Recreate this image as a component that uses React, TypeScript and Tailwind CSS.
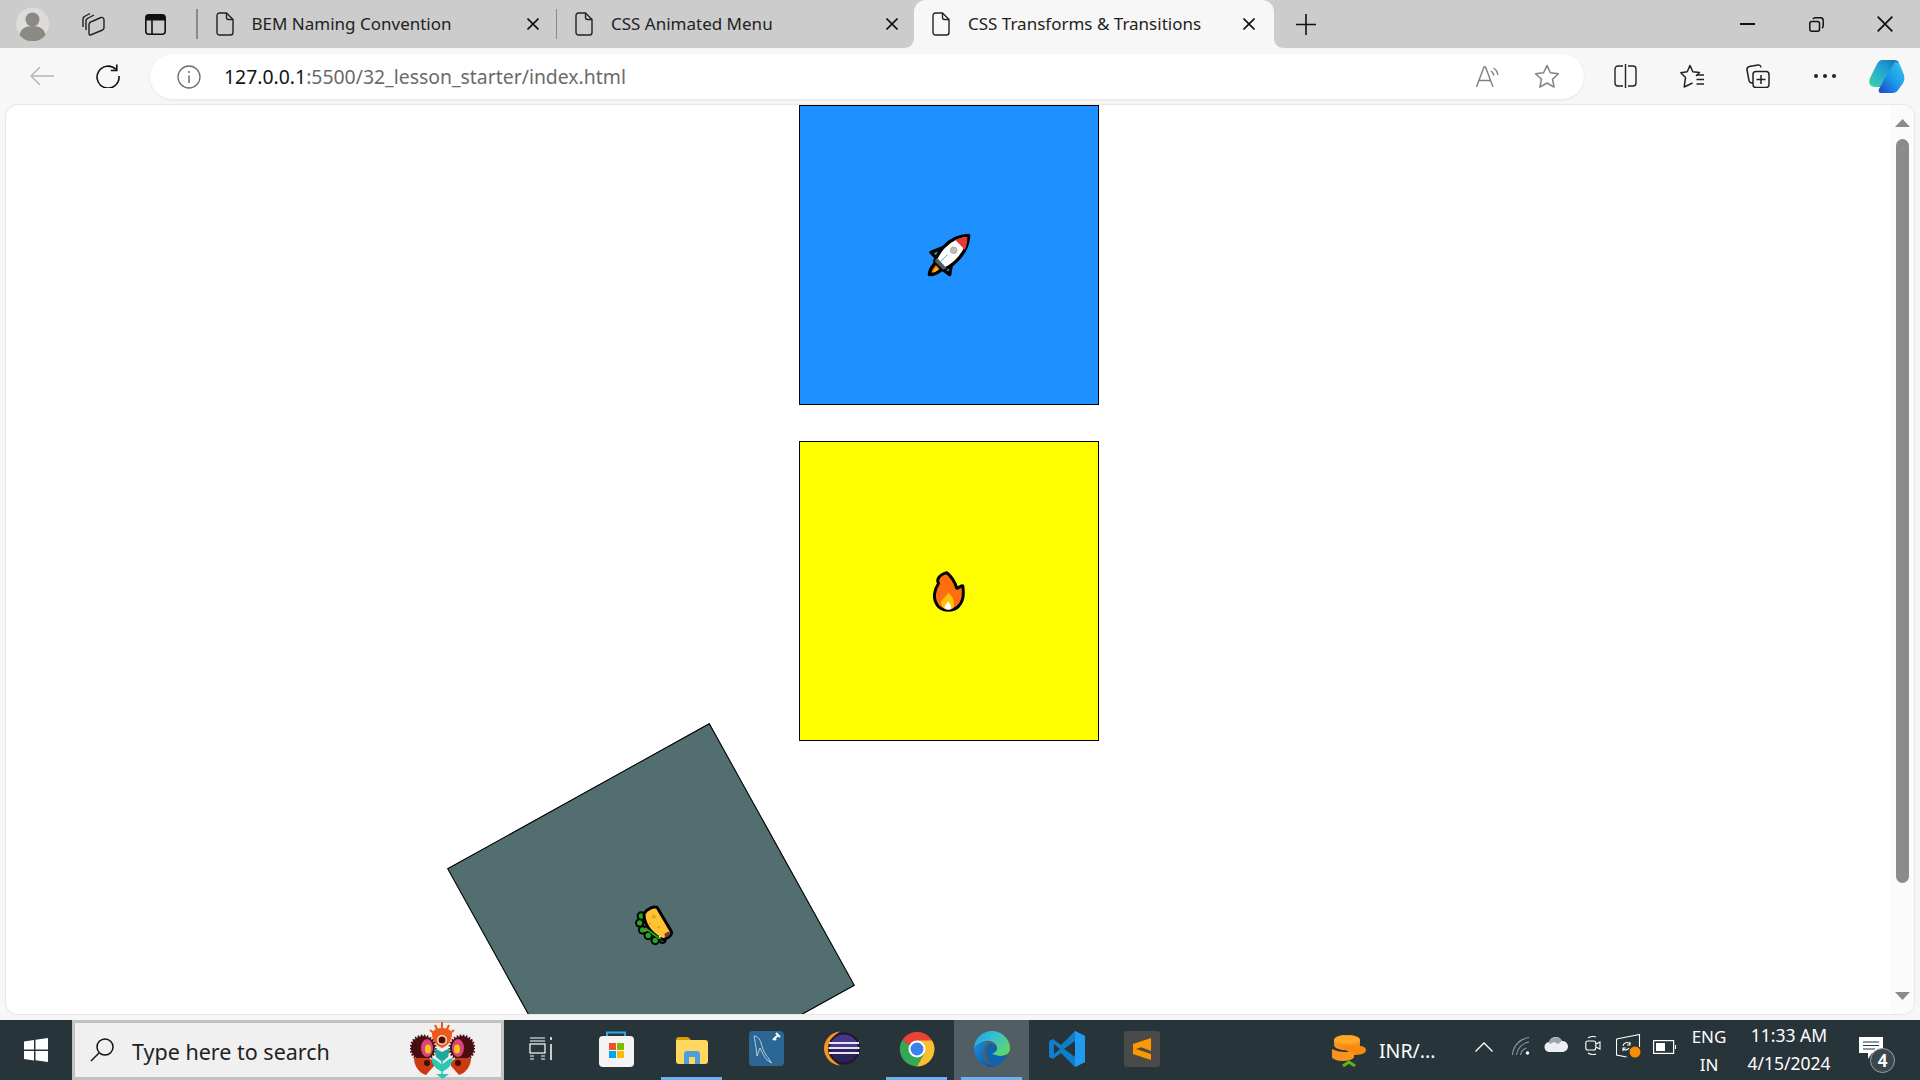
import type { ReactNode } from 'react'

const sans = '[font-family:"Noto_Sans",sans-serif]'

function DocIcon() {
  return (
    <svg viewBox="0 0 18 24" className="w-[18px] h-[24px] shrink-0" fill="none" stroke="#222" strokeWidth="1.4">
      <path d="M3 1h7.5L17 7.5V20.5a2.5 2.5 0 0 1-2.5 2.500H3.500A2.500 2.500 0 0 1 1 20.500V3.500A2.500 2.500 0 0 1 3.500 1Z" strokeLinejoin="round" />
      <path d="M10.500 1v4.500a2 2 0 0 0 2 2H17" />
    </svg>
  )
}

function CloseX({ size = 12, width = 1.6 }: { size?: number; width?: number }) {
  return (
    <svg viewBox="0 0 12 12" width={size} height={size} className="shrink-0" stroke="#111" strokeWidth={width * 12 / size} fill="none">
      <path d="M.5.5l11 11M11.500.5l-11 11" />
    </svg>
  )
}

function Tab({ title, className, active }: { title: string; className: string; active?: boolean }) {
  return (
    <div className={`relative flex items-center h-12 pl-[18px] shrink-0 ${className}`}>
      {active && (
        <svg viewBox="0 0 10 10" className="absolute bottom-0 left-[-10px] w-[10px] h-[10px]"><path d="M10 0v10H0C6 10 10 6 10 0Z" fill="#f7f7f7" /></svg>
      )}
      {active && (
        <svg viewBox="0 0 10 10" className="absolute bottom-0 right-[-10px] w-[10px] h-[10px]"><path d="M0 0v10h10C4 10 0 6 0 0Z" fill="#f7f7f7" /></svg>
      )}
      <DocIcon />
      <span className="ml-[18px] w-[257px] text-[17px] text-[#222] whitespace-nowrap">{title}</span>
      <span className="ml-[18px]"><CloseX /></span>
    </div>
  )
}

function TitleBar() {
  return (
    <div className="h-12 bg-[#cccccc] flex items-center shrink-0">
      <svg viewBox="0 0 33 34" className="w-[33px] h-[34px] ml-[16px] shrink-0">
        <circle cx="16.500" cy="17" r="16.500" fill="#dcdcd8" />
        <circle cx="16.500" cy="12.500" r="7" fill="#8c8984" />
        <path d="M3.500 28c1-6 6-9 13-9s12 3 13 9a16.500 16.500 0 0 1-26 0Z" fill="#8c8984" />
      </svg>
      <svg viewBox="0 0 25 24" className="w-[25px] h-[24px] ml-[31px] shrink-0" fill="none" stroke="#222" strokeWidth="1.400" strokeLinejoin="round">
        <path d="M3 15V7c0-1 .5-2 1.500-2.500L10 1.500" />
        <path d="M6 18V8.500C6 7.500 6.500 7 7.500 6.500L14 3" />
        <path d="M10 23h.5l11-4.500c1.500-.5 2.500-1.500 2.500-3V8c0-2-1.500-3-3-2.500l-8 3.500C11 9.500 9 11 9 13v8.500c0 1 .5 1.500 1 1.500Z" />
      </svg>
      <svg viewBox="0 0 21 21" className="w-[21px] h-[21px] ml-[40px] shrink-0" fill="none">
        <rect x=".8" y=".8" width="19.400" height="19.400" rx="3" stroke="#111" strokeWidth="1.600" />
        <path d="M1 1h19v5.500H1Z" fill="#111" />
        <path d="M7 6v14" stroke="#111" strokeWidth="1.600" />
      </svg>
      <div className="w-[1.500px] h-[30px] bg-[#8a8a8a] ml-[30px] shrink-0" />
      <Tab title="BEM Naming Convention" className="w-[358px]" />
      <div className="w-[1.500px] h-[30px] bg-[#8a8a8a] shrink-0" />
      <Tab title="CSS Animated Menu" className="w-[357px]" />
      <Tab title="CSS Transforms &amp; Transitions" className="w-[360px] bg-[#f7f7f7] rounded-t-[12px]" active />
      <svg viewBox="0 0 20 21" className="w-[20px] h-[21px] ml-[22px] shrink-0" stroke="#111" strokeWidth="1.600">
        <path d="M10 0v21M0 10.500h20" />
      </svg>
      <div className="ml-auto flex items-center">
        <div className="w-[15px] h-[2px] bg-[#111]" />
        <svg viewBox="0 0 15 15" className="w-[15px] h-[15px] ml-[54px]" fill="none" stroke="#111" strokeWidth="1.500">
          <rect x=".8" y="4.500" width="9.700" height="9.700" rx="2" />
          <path d="M4 2c.5-.8 1.200-1.200 2-1.200h5.500c1.500 0 2.700 1.200 2.700 2.700V9c0 .8-.4 1.500-1.200 2" />
        </svg>
        <span className="ml-[53px] mr-[27px]"><CloseX size={16} width={1.8} /></span>
      </div>
    </div>
  )
}

function ToolIcons() {
  return (
    <div className="flex items-center ml-[30px] mt-[5px]">
      <svg viewBox="0 0 23 24" className="w-[23px] h-[24px]" fill="none" stroke="#222" strokeWidth="1.400">
        <path d="M9 2H4A3 3 0 0 0 1 5v14a3 3 0 0 0 3 3h5M14 2h5a3 3 0 0 1 3 3v14a3 3 0 0 1-3 3h-5M11.500 0v24" />
      </svg>
      <svg viewBox="0 0 24 25" className="w-[24px] h-[25px] ml-[43px]" fill="none" stroke="#222" strokeWidth="1.500" strokeLinejoin="round">
        <path d="M16 12l3.500-3.500-6.700-.8L10 1.500 7.200 7.700l-6.400 1 4.700 4.800L4.200 23l8.300-4" />
        <path d="M16.500 11H24M16.500 15.500H24M16.500 20H24" />
      </svg>
      <svg viewBox="0 0 24 24" className="w-[24px] h-[24px] ml-[42px]" fill="none" stroke="#222" strokeWidth="1.500" strokeLinejoin="round">
        <path d="M7 19H6c-1.500 0-2.500-1-3-2.500L1 6C.8 4 2 2.800 3.500 2.500L12 1c1.500-.2 2.800.8 3 2.500" />
        <rect x="7" y="7.500" width="16" height="16" rx="3" />
        <path d="M15 11v9M10.500 15.500h9" />
      </svg>
      <div className="flex items-center gap-[5px] ml-[44px] w-[20px]">
        <span className="w-[4px] h-[4px] rounded-full bg-[#222] shrink-0" />
        <span className="w-[4px] h-[4px] rounded-full bg-[#222] shrink-0" />
        <span className="w-[4px] h-[4px] rounded-full bg-[#222] shrink-0" />
      </div>
      <svg viewBox="0 0 36 34" className="w-[36px] h-[34px] ml-[35px]">
        <defs>
          <linearGradient id="cpa" x1="0" y1="1" x2="1" y2="0">
            <stop offset="0" stopColor="#3fd6a5" />
            <stop offset=".6" stopColor="#1f9fd6" />
            <stop offset="1" stopColor="#0f6f9f" />
          </linearGradient>
          <linearGradient id="cpb" x1="0" y1="1" x2="1" y2="0">
            <stop offset="0" stopColor="#2340c8" />
            <stop offset=".5" stopColor="#1b9ce8" />
            <stop offset="1" stopColor="#38c6ee" />
          </linearGradient>
        </defs>
        <path d="M13 1h12c3 0 4 1 5 3L17 26c-1 1-2 2-5 2H6C1 28-1 24 1 19L8 5c1-2 3-4 5-4Z" fill="url(#cpa)" />
        <path d="M26 3c3 0 4 2 5 3l4 10c1 4 0 8-3 11l-3 4c-1 2-3 3-6 3H12c-2 0-3-2-2-4l5-9Z" fill="url(#cpb)" />
      </svg>
    </div>
  )
}

function Toolbar() {
  return (
    <div className="h-[57px] bg-[#f7f7f7] flex items-start pt-[6px] shrink-0">
      <svg viewBox="0 0 24 20" className="w-[24px] h-[20px] ml-[30px] mt-[12px] shrink-0" fill="none" stroke="#b5b5b5" strokeWidth="1.500">
        <path d="M24 10H1M10 1l-9 9 9 9" />
      </svg>
      <svg viewBox="0 0 24 24" className="w-[24px] h-[24px] ml-[42px] mt-[10px] shrink-0" fill="none" stroke="#111" strokeWidth="1.600">
        <path d="M20 5.500A11 11 0 1 0 23 12" />
        <path d="M20.800 .5v6h-6" />
      </svg>
      <div className="ml-[30px] w-[1434px] h-[45px] bg-white rounded-[23px] shadow-[0_1px_3px_rgba(0,0,0,0.08)] flex items-center shrink-0">
        <svg viewBox="0 0 24 24" className="w-[24px] h-[24px] ml-[27px] shrink-0" fill="none" stroke="#6e6e6e" strokeWidth="1.300">
          <circle cx="12" cy="12" r="11" />
          <path d="M12 10.500V18" strokeWidth="1.500" />
          <circle cx="12" cy="7" r="1" fill="#6e6e6e" stroke="none" />
        </svg>
        <span className="ml-[23px] mt-[1px] text-[19.400px] text-[#6a6a6a] whitespace-nowrap"><span className="text-[#111]">127.0.0.1</span>:5500/32_lesson_starter/index.html</span>
        <svg viewBox="0 0 24 22" className="w-[24px] h-[22px] ml-auto shrink-0" fill="none" stroke="#808080" strokeWidth="1.400">
          <path d="M.5 21L8 1h1.500L17 21M3.500 14.500h11" />
          <path d="M15 5c1.500 1 2.500 2.500 2.700 4.500M17.500 2c2.500 1.500 4 4 4.300 7" />
        </svg>
        <svg viewBox="0 0 26 25" className="w-[26px] h-[25px] ml-[34px] mr-[24px] shrink-0" fill="none" stroke="#808080" strokeWidth="1.500" strokeLinejoin="round">
          <path d="M13 1.500l3.400 7.300 8 1-5.900 5.400 1.600 7.900L13 19l-7.100 4.100 1.600-7.900L1.600 9.800l8-1Z" />
        </svg>
      </div>
      <ToolIcons />
    </div>
  )
}

function RocketEmoji() {
  return (
    <svg viewBox="80 40 132 135" className="w-[44px] h-[45px]">
      <g stroke="#000" strokeWidth="10" strokeLinejoin="round">
        <path d="M108 128C95 140 88 150 87 165c13 0 28-7 38-17Z" fill="#f57c00" />
        <path d="M128 84L92 98l18 20ZM155 124l-7 41-24-18Z" fill="#29a9e0" />
        <path d="M205 47c-30 1-55 13-75 35-12 13-22 30-27 43l25 25c13-5 30-16 42-28 22-22 34-47 35-75Z" fill="#fff" />
      </g>
      <path d="M108 144c-5 5-9 10-11 15 6-2 12-5 17-9Z" fill="#ffc107" />
      <path d="M201 51c-14 1-26 5-36 10l29 29c5-12 7-25 7-39Z" fill="#e53935" />
      <path d="M110 114l29 32-11 4-25-25Z" fill="#4f5b62" />
      <circle cx="160" cy="92" r="10" fill="#bdbdbd" stroke="#9e9e9e" strokeWidth="2" />
      <path d="M121 126l20-21" stroke="#29b6f6" strokeWidth="3" />
    </svg>
  )
}

function FireEmoji() {
  return (
    <svg viewBox="95 30 100 130" className="w-[33px] h-[43px]">
      <path d="M140 38c10 7 25 27 30 47 5 0 15-10 18-7 4 22 2 47-13 62-15 15-50 18-65-5-15-20-5-50 5-65-7-10 0-25 25-32Z" fill="#ff6d10" stroke="#000" strokeWidth="9" strokeLinejoin="round" />
      <path d="M145 98c15 15 20 32 15 47-15 10-35 5-38-15 0-10 10-12 23-32Z" fill="#ffc107" />
      <path d="M143 125c7 6 12 14 10 23-8 4-18 2-20-6 0-6 6-8 10-17Z" fill="#fff" />
    </svg>
  )
}

function TacoEmoji() {
  return (
    <svg viewBox="72 38 124 136" className="w-[41px] h-[45px] rotate-[29deg] translate-x-[4px]">
      <g fill="#000">
        <circle cx="92" cy="78" r="14" /><circle cx="87" cy="99" r="14" /><circle cx="96" cy="120" r="14" />
        <circle cx="113" cy="137" r="14" /><circle cx="134" cy="152" r="14" /><circle cx="156" cy="150" r="13" />
      </g>
      <g fill="#1faa1f">
        <circle cx="92" cy="78" r="8" /><circle cx="87" cy="99" r="8" /><circle cx="96" cy="120" r="8" />
        <circle cx="113" cy="137" r="8" /><circle cx="134" cy="152" r="8" /><circle cx="156" cy="149" r="7" />
      </g>
      <path d="M100 70c10-15 30-22 40-18l43 73c3 7-3 15-11 18l-12 7c-30-10-60-40-60-80Z" fill="#ffc233" stroke="#000" strokeWidth="9" strokeLinejoin="round" />
      <path d="M105 112l50 37-12-2-40-30Z" fill="#1faa1f" />
      <circle cx="105" cy="122" r="4" fill="#e8604c" /><circle cx="148" cy="141" r="3" fill="#fff" />
      <circle cx="130" cy="80" r="6" fill="#e8a317" /><circle cx="118" cy="101" r="3" fill="#e8a317" /><circle cx="145" cy="112" r="4" fill="#e8a317" /><circle cx="110" cy="72" r="2" fill="#e8a317" />
      <path d="M162 132l14-8 4 8-8 9-8 2Z" fill="#7a3b3b" />
    </svg>
  )
}

function Box({ className, children }: { className: string; children: ReactNode }) {
  return (
    <div className={`w-[300px] h-[300px] border border-black flex items-center justify-center shrink-0 ${className}`}>
      {children}
    </div>
  )
}

function Scrollbar() {
  return (
    <div className="w-[23px] bg-[#fbfbfb] flex flex-col items-center pt-[14px] px-[2px] shrink-0">
      <svg viewBox="0 0 15 8" className="w-[15px] h-[8px] shrink-0"><path d="M7.500 0L15 8H0Z" fill="#8a8a8a" /></svg>
      <div className="w-[13px] h-[744px] mt-[12px] rounded-full bg-[#8b8b8b] shrink-0" />
      <svg viewBox="0 0 15 8" className="w-[15px] h-[8px] mt-[109px] shrink-0"><path d="M0 0h15L7.500 8Z" fill="#8a8a8a" /></svg>
    </div>
  )
}

function Page() {
  return (
    <div className="flex-1 min-h-0 bg-[#f7f7f7] pl-[6px] pr-[6px] pb-[6px]">
      <div className="h-full bg-white rounded-[12px] shadow-[0_0_1px_1px_#e6e6e6] overflow-hidden flex">
        <div className="flex-1 flex flex-col items-center overflow-hidden">
          <Box className="bg-[#1e90ff]"><RocketEmoji /></Box>
          <Box className="bg-[#ffff00] mt-[36px]"><FireEmoji /></Box>
          <Box className="bg-[#536e70] mt-[36px] -translate-x-[298px] -rotate-[29deg]"><TacoEmoji /></Box>
        </div>
        <Scrollbar />
      </div>
    </div>
  )
}

function Flower() {
  return (
    <svg viewBox="0 0 65 57" className="w-[65px] h-[57px] ml-[-29px] shrink-0">
      <g stroke="#e8590c" strokeWidth="2">
        <path d="M32 18L20 8M32 18L25 3M32 18V0M32 18l7-15M32 18L44 8" />
      </g>
      <path d="M22 12c0-8 20-8 20 0 0 6-4 12-10 14-6-2-10-8-10-14Z" fill="#f0591c" />
      <circle cx="32" cy="18" r="5" fill="#fbe2c0" /><circle cx="32" cy="18" r="3.500" fill="#4a0e12" />
      <circle cx="13" cy="26" r="12" fill="#4a0e12" stroke="#4a0e12" strokeWidth="3" strokeDasharray="1.500 1.500" />
      <circle cx="52" cy="26" r="12" fill="#4a0e12" stroke="#4a0e12" strokeWidth="3" strokeDasharray="1.500 1.500" />
      <ellipse cx="17" cy="26" rx="6" ry="9" fill="#d9477a" /><ellipse cx="48" cy="26" rx="6" ry="9" fill="#d9477a" />
      <ellipse cx="18" cy="27" rx="3" ry="4.500" fill="#f5c518" /><ellipse cx="47" cy="27" rx="3" ry="4.500" fill="#f5c518" />
      <path d="M4 36h14c5 2 7 5 6 8l-8 9C9 51 4 44 4 36Z" fill="#cc3a10" /><path d="M61 36H47c-5 2-7 5-6 8l8 9c7-2 12-9 12-17Z" fill="#cc3a10" />
      <circle cx="17" cy="41" r="3" fill="#3a0c0c" /><circle cx="48" cy="41" r="3" fill="#3a0c0c" />
      <path d="M24 26l8 4 8-4-2 9-6 5-6-5Z" fill="#1fa898" />
      <path d="M32 38v18M32 44c-3-3-6-6-10-7 1 6 5 10 10 12 5-2 9-6 10-12-4 1-7 4-10 7Z" fill="#2cc7b2" stroke="#2cc7b2" strokeWidth="1.500" />
      <path d="M26 52h13l-6.500 5Z" fill="#2cc7b2" />
    </svg>
  )
}

function TaskSlot({ children, active, open, className }: { children: ReactNode; active?: boolean; open?: boolean; className?: string }) {
  return (
    <div className={`w-[75px] h-[60px] flex flex-col items-center shrink-0 ${active ? 'bg-[#515e64]' : ''} ${className ?? ''}`}>
      <div className="flex-1 flex items-center justify-center">{children}</div>
      <div className={`w-[61px] h-[3px] ${open ? 'bg-[#6cb2ee]' : ''}`} />
    </div>
  )
}

function TaskApps() {
  return (
    <div className="flex shrink-0">
      <TaskSlot>
        <svg viewBox="0 0 24 23" className="w-[24px] h-[23px] mr-[2px]" fill="none" stroke="#fff" strokeWidth="1.200">
          <path d="M1 1h15M1 4h15M1 19h4M12 19h4M1 22h4M12 22h4" />
          <rect x="1" y="7" width="15" height="9" />
          <path d="M22 0v3M22 7v16" strokeWidth="1.500" />
        </svg>
      </TaskSlot>
      <TaskSlot>
        <svg viewBox="0 0 35 36" className="w-[35px] h-[36px]">
          <path d="M8 6V1.500h18V6" fill="none" stroke="#29a9f0" strokeWidth="2" />
          <rect x="0" y="5" width="35" height="31" rx="4" fill="#f4f4f4" />
          <rect x="10" y="12" width="7" height="7" fill="#f25022" /><rect x="18" y="12" width="7" height="7" fill="#7fba00" />
          <rect x="10" y="20" width="7" height="7" fill="#00a4ef" /><rect x="18" y="20" width="7" height="7" fill="#ffb900" />
        </svg>
      </TaskSlot>
      <TaskSlot open>
        <svg viewBox="0 0 32 27" className="w-[32px] h-[27px] mt-[3px]">
          <path d="M0 3c0-2 1-3 3-3h9l3 3H0Z" fill="#d9a000" />
          <path d="M0 3h29c2 0 3 1 3 3v18c0 2-1 3-3 3H3c-2 0-3-1-3-3Z" fill="#ffd75e" />
          <path d="M8 27V17c0-2 1-3 3-3h10c2 0 3 1 3 3v10h-5v-7h-6v7Z" fill="#4a9ede" />
        </svg>
      </TaskSlot>
      <TaskSlot>
        <svg viewBox="0 0 35 35" className="w-[35px] h-[35px]" fill="none">
          <rect width="35" height="35" rx="4" fill="#2b6794" />
          <path d="M5 5c3 0 6 3 7 7 2 5 2 8 5 12 1 2 3 3 4 6l2 2-5-3c-3-3-5-8-7-12l-3 8-1-9C6 12 6 8 5 5Z" stroke="#d9e4ec" strokeWidth=".8" />
          <path d="M24 9l5-5M27 2l4 4M25 7l2 2" stroke="#fff" strokeWidth="2" />
        </svg>
      </TaskSlot>
      <TaskSlot>
        <svg viewBox="0 0 37 35" className="w-[37px] h-[35px]">
          <path d="M17 .5C8 1 1 9 1 17.500S8 34 17 34.500C11 31 7 25 7 17.500S11 4 17 .5Z" fill="#f7941e" />
          <circle cx="21" cy="17.500" r="16" fill="#1c1630" />
          <path d="M7 17.500a14 14 0 0 1 28 0Z" fill="#473788" /><path d="M7 17.500a14 14 0 0 0 28 0Z" fill="#2c2255" />
          <path d="M6 12h30M5.500 17h31M6 22h30" stroke="#e8e4f4" strokeWidth="2" />
        </svg>
      </TaskSlot>
      <TaskSlot open>
        <svg viewBox="0 0 36 36" className="w-[36px] h-[36px]">
          <path d="M18 18L3 9.500A17.500 17.500 0 0 1 33.200 9.500Z" fill="#ea4335" />
          <path d="M18 18h17.500a17.500 17.500 0 0 1-17.600 17.500Z" fill="#fbc02d" />
          <path d="M33 9.500H18v8.500h17.500c0-3-1-6-2.500-8.500Z" fill="#fbc02d" />
          <path d="M18 18L3 9.500A17.500 17.500 0 0 0 18 35.500l7.500-13Z" fill="#34a853" />
          <circle cx="18" cy="18" r="8.500" fill="#fff" /><circle cx="18" cy="18" r="6.500" fill="#3b82f0" />
        </svg>
      </TaskSlot>
      <TaskSlot open active>
        <svg viewBox="0 0 36 36" className="w-[36px] h-[36px]">
          <defs>
            <linearGradient id="edg" x1="0" y1="0" x2="1" y2=".6">
              <stop offset="0" stopColor="#1b9de2" /><stop offset=".5" stopColor="#35c1d6" /><stop offset="1" stopColor="#5ed56c" />
            </linearGradient>
            <linearGradient id="edb" x1="0" y1="0" x2="1" y2="1">
              <stop offset="0" stopColor="#1a8fdc" /><stop offset="1" stopColor="#0c4f9e" />
            </linearGradient>
          </defs>
          <path d="M18 0c10 0 18 8 18 17 0 5-4 8-9 8-4 0-8-1-9-3 2 0 5-2 5-5 0-5-6-8-11-7C6 11 2 14 0 18 0 8 8 0 18 0Z" fill="url(#edg)" />
          <path d="M0 18c2-4 6-7 12-7 1 0 3 0 4 1-4 1-7 5-7 10 0 6 5 12 12 13-1 .7-2 1-3 1C8 36 0 28 0 18Z" fill="url(#edb)" />
          <path d="M12 21c0-3 1-6 4-8 3 0 6 2 7 4 0 3-3 5-5 5 1 2 5 3 9 3 3 0 5-1 6-2-2 6-7 11-12 12-5-2-9-8-9-14Z" fill="#0f62b0" />
        </svg>
      </TaskSlot>
      <TaskSlot>
        <svg viewBox="0 0 36 36" className="w-[36px] h-[36px]">
          <path d="M26 0l10 5v26l-10 5-14-14-8 6-4-2V10l4-2 8 6Z" fill="#0f7fc9" />
          <path d="M26 0l10 5v26l-10 5Z" fill="#1f9cf0" />
          <path d="M26 10L15 18l11 8Z" fill="#27343a" /><path d="M5 13l6 5-6 5Z" fill="#27343a" />
        </svg>
      </TaskSlot>
      <TaskSlot>
        <svg viewBox="0 0 36 36" className="w-[36px] h-[36px]">
          <rect width="36" height="36" rx="3" fill="#4a4a4a" />
          <path d="M27 7v6L9 19v-6ZM9 17l18 6v6L9 23Z" fill="#ff9800" />
          <path d="M27 13v7L9 13Z" fill="#ff9800" />
        </svg>
      </TaskSlot>
    </div>
  )
}

function Tray() {
  return (
    <div className="flex items-center h-[60px] text-white shrink-0">
      <svg viewBox="0 0 34 33" className="w-[34px] h-[33px] ml-[153px] mt-[2px]">
        <path d="M2 5a11 4.500 0 0 1 26 0v5a11 4.500 0 0 1-26 0Z" fill="#f7931e" />
        <ellipse cx="15" cy="5" rx="13" ry="4" fill="#ffa726" />
        <path d="M8 11h20a6 4 0 0 1 6 4c0 4-6 5-13 5Z" fill="#f98a0e" />
        <path d="M0 14c4 2 8 3 14 3s8 0 8 0v5a11 4 0 0 1-22 0Z" fill="#f7931e" />
        <path d="M11 31l6-4 6 4" fill="none" stroke="#5cb81a" strokeWidth="3" />
      </svg>
      <span className="ml-[13px] w-[57px] text-[19.500px] leading-none mt-[2px] whitespace-nowrap">INR/...</span>
      <svg viewBox="0 0 18 10" className="w-[18px] h-[10px] ml-[39px] mb-[7px]" fill="none" stroke="#fff" strokeWidth="1.300"><path d="M.5 9.500L9 1l8.500 8.500" /></svg>
      <svg viewBox="0 0 18 18" className="w-[18px] h-[18px] ml-[19px] mb-[8px]" fill="none" stroke="#8c979c" strokeWidth="1.100">
        <path d="M.5 18C1 9 8 1.500 17 .5M4.500 18C5 12 10 6 17 5M8.500 18c.4-3 3-6 6-7" />
        <circle cx="15.500" cy="16" r="1.700" fill="#fff" stroke="none" />
      </svg>
      <svg viewBox="0 0 24 16" className="w-[24px] h-[16px] ml-[14px] mb-[10px]">
        <path d="M6 15a5 5 0 0 1-1-10 7 7 0 0 1 13-1 5.500 5.500 0 0 1 1 11Z" fill="#eceff1" />
        <path d="M5 6a7 7 0 0 1 13-2l-4 3-4-2-4 2Z" fill="#9aa3a8" />
      </svg>
      <svg viewBox="0 0 16 21" className="w-[16px] h-[21px] ml-[17px] mb-[9px]" fill="none" stroke="#fff" strokeWidth="1.100">
        <rect x=".8" y="6" width="10" height="9" rx="2" />
        <path d="M11 9l4-2v7l-4-2M3 3C5 1.500 9 1 11 2M3 18c2 1.500 6 2 8 1" />
      </svg>
      <svg viewBox="0 0 25 24" className="w-[25px] h-[24px] ml-[15px] mb-[8px]" fill="none" stroke="#fff" strokeWidth="1.100">
        <path d="M.5 5L23.500.5V13M.5 5v16l10 2" />
        <path d="M7 12a4 4 0 0 1 7-2M13 14a4 4 0 0 1-6 1M14 8v3h-3M7 17v-3h3" />
        <circle cx="19" cy="18" r="5.500" fill="#f98c00" stroke="none" />
      </svg>
      <svg viewBox="0 0 23 14" className="w-[23px] h-[14px] ml-[12px] mb-[7px]" fill="none" stroke="#fff" strokeWidth="1.200">
        <rect x=".6" y=".6" width="20" height="12.800" />
        <rect x="3" y="3" width="9" height="8" fill="#fff" stroke="none" />
        <path d="M22.500 5v4" />
      </svg>
      <div className="ml-[16px] w-[34px] h-[60px] flex flex-col items-center text-[17px] leading-none">
        <span className="mt-[8px]">ENG</span>
        <span className="mt-[11px]">IN</span>
      </div>
      <div className="ml-[21px] w-[84px] h-[60px] flex flex-col items-center text-[17.500px] leading-none whitespace-nowrap">
        <span className="mt-[7px]">11:33 AM</span>
        <span className="mt-[10.500px]">4/15/2024</span>
      </div>
      <div className="relative ml-[28px] w-[24px] h-[22px] mb-[4px]">
        <svg viewBox="0 0 24 22" className="w-[24px] h-[22px]" fill="#fff">
          <path d="M0 0h24v16H13l-4 6v-6H0Z" />
          <path d="M4 5h16M4 8.500h16M4 12h12" stroke="#27343a" strokeWidth="1.200" />
        </svg>
        <div className="absolute left-[11px] top-[11px] w-[25px] h-[25px] rounded-full bg-[#3c474d] border border-[#9aa2a6] flex items-center justify-center text-[17px] font-bold">4</div>
      </div>
    </div>
  )
}

function Taskbar() {
  return (
    <div className={`h-[60px] bg-[#27343a] flex shrink-0 ${sans}`}>
      <div className="w-[72px] flex items-center justify-center shrink-0">
        <svg viewBox="0 0 24 24" className="w-[24px] h-[24px]" fill="#fff">
          <path d="M0 3.500l10-1.500v9.500H0ZM11.500 1.800L24 0v11.500H11.500ZM0 13h10v9.500l-10-1.500ZM11.500 13H24v11l-12.500-1.800Z" />
        </svg>
      </div>
      <div className="w-[432px] h-[60px] bg-[#f0f0f0] border-[3px] border-[#c2c2c2] flex items-center shrink-0">
        <svg viewBox="0 0 24 24" className="w-[24px] h-[24px] ml-[15px] shrink-0" fill="none" stroke="#111" strokeWidth="1.500">
          <circle cx="15" cy="9" r="8" /><path d="M9 15L1 23" />
        </svg>
        <span className="ml-[18px] mt-[4px] text-[21.500px] text-[#222] whitespace-nowrap">Type here to search</span>
        <span className="ml-auto mr-[26px]"><Flower /></span>
      </div>
      <TaskApps />
      <Tray />
    </div>
  )
}

export default function App() {
  return (
    <div className={`h-screen w-full flex flex-col overflow-hidden bg-white ${sans}`}>
      <TitleBar />
      <Toolbar />
      <Page />
      <Taskbar />
    </div>
  )
}
